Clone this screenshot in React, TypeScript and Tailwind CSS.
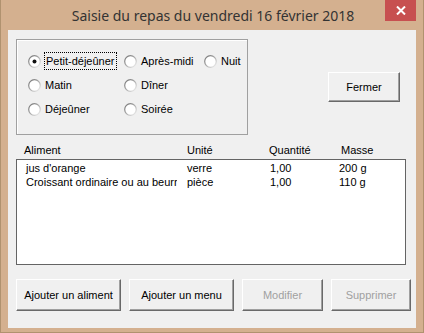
import React from 'react';

const ui = { fontFamily: '"Liberation Sans", Arial, sans-serif' };

const Radio = ({ checked }: { checked?: boolean }) => (
    <svg width="13" height="13" viewBox="0 0 13 13" className="shrink-0">
        <defs>
            <linearGradient id="rg" x1="0" y1="0" x2="1" y2="1">
                <stop offset="0" stopColor="#6e6e6e" />
                <stop offset="0.5" stopColor="#a9a9a9" />
                <stop offset="1" stopColor="#f4f4f4" />
            </linearGradient>
        </defs>
        <circle cx="6.5" cy="6.5" r="5.8" fill="#ffffff" stroke="url(#rg)" strokeWidth="1.2" />
        {checked && <circle cx="6.5" cy="6.5" r="2" fill="#111111" />}
    </svg>
);

const Option = ({ label, checked, focused }: { label: string; checked?: boolean; focused?: boolean }) => (
    <div className="flex items-center h-[24px]">
        <Radio checked={checked} />
        <span
            className={
                focused
                    ? 'ml-[3px] px-[1px] h-[18px] leading-[16px] border border-dotted border-black text-black'
                    : 'ml-[4px] px-[0px] h-[18px] leading-[18px] text-black'
            }
        >
            {label}
        </span>
    </div>
);

const WinButton = ({ label, width, height, disabled }: { label: string; width: string; height: string; disabled?: boolean }) => (
    <button
        className={`${width} ${height} shrink-0 bg-[#f0f0f0] border border-t-white border-l-white border-r-[#696969] border-b-[#696969] shadow-[inset_-1px_-1px_0_#a0a0a0] text-[11px] ${disabled ? 'text-[#a0a0a0]' : 'text-black'}`}
        style={ui}
    >
        {label}
    </button>
);

const rows = [
    { name: "jus d'orange", unit: 'verre', qty: '1,00', mass: '200 g' },
    { name: 'Croissant ordinaire ou au beurre', unit: 'pièce', qty: '1,00', mass: '110 g' },
];

const App = () => {
    return (
        <div className="w-[424px] h-[333px] bg-[#d4b08f] border-x border-b border-[#b0926f] flex flex-col relative" style={ui}>
            {/* title bar */}
            <div className="h-[30px] flex items-center justify-center shrink-0">
                <span className="text-[14px] text-[#333333] pl-[2px] pt-[1px]" style={{ fontFamily: '"Noto Sans", "Open Sans", sans-serif' }}>
                    Saisie du repas du vendredi 16 février 2018
                </span>
            </div>
            <div className="absolute top-0 right-[7px] w-[31px] h-[21px] bg-[#c75050] flex items-center justify-center">
                <svg width="10" height="9" viewBox="0 0 10 9">
                    <path d="M1 0.5 L9 8.5 M9 0.5 L1 8.5" stroke="#ffffff" strokeWidth="2" />
                </svg>
            </div>

            {/* client area */}
            <div className="flex-1 mx-[7px] mb-[4px] bg-[#f0f0f0] flex flex-col pl-[8px] text-[11px] text-black">
                <div className="flex mt-[9px]">
                    <div className="w-[232px] h-[96px] border border-[#a0a0a0] shadow-[inset_1px_1px_0_#ffffff] pl-[11px] pt-[9px] grid grid-cols-[96px_80px_1fr] content-start">
                        <Option label="Petit-déjeûner" checked focused />
                        <Option label="Après-midi" />
                        <Option label="Nuit" />
                        <Option label="Matin" />
                        <Option label="Dîner" />
                        <div />
                        <Option label="Déjeûner" />
                        <Option label="Soirée" />
                    </div>
                    <div className="ml-[80px] mt-[33px]">
                        <WinButton label="Fermer" width="w-[72px]" height="h-[30px]" />
                    </div>
                </div>

                {/* header */}
                <div className="flex mt-[8px] h-[14px] leading-[14px]">
                    <span className="w-[171px] shrink-0 pl-[8px]">Aliment</span>
                    <span className="w-[82px] shrink-0">Unité</span>
                    <span className="w-[72px] shrink-0">Quantité</span>
                    <span>Masse</span>
                </div>

                {/* list */}
                <div className="mt-[2px] w-[390px] h-[106px] bg-white border border-[#646464] pt-[1px]">
                    {rows.map((r) => (
                        <div key={r.name} className="flex h-[14px] leading-[14px]">
                            <span className="w-[160px] shrink-0 pl-[9px] whitespace-nowrap overflow-hidden">{r.name}</span>
                            <span className="w-[83px] shrink-0 ml-[10px]">{r.unit}</span>
                            <span className="w-[69px] shrink-0">{r.qty}</span>
                            <span>{r.mass}</span>
                        </div>
                    ))}
                </div>

                {/* buttons */}
                <div className="flex gap-[8px] mt-[14px]">
                    <WinButton label="Ajouter un aliment" width="w-[105px]" height="h-[32px]" />
                    <WinButton label="Ajouter un menu" width="w-[105px]" height="h-[32px]" />
                    <WinButton label="Modifier" width="w-[81px]" height="h-[32px]" disabled />
                    <WinButton label="Supprimer" width="w-[80px]" height="h-[32px]" disabled />
                </div>
            </div>
        </div>
    );
};

export default App;
